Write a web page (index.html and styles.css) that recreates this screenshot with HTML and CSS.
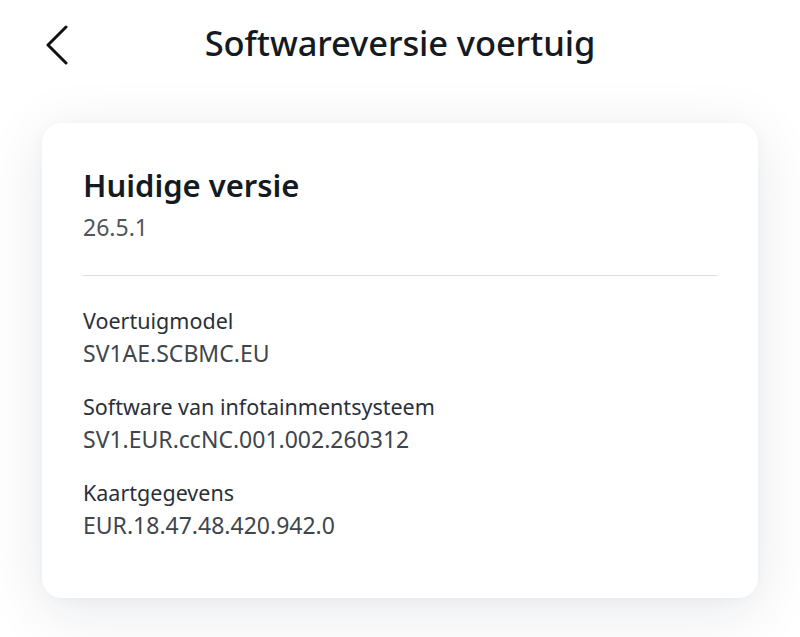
FILE: index.html
```html
<!DOCTYPE html>
<html lang="nl">
<head>
<meta charset="utf-8">
<title>Softwareversie voertuig</title>
<link rel="stylesheet" href="styles.css">
</head>
<body>
<header class="topbar">
  <button class="back" aria-label="Terug">
    <svg width="24" height="40" viewBox="0 0 24 40" fill="none" stroke="#111" stroke-width="3" stroke-linecap="round" stroke-linejoin="round"><path d="M21 2 L3 20 L21 38"/></svg>
  </button>
  <h1 class="title">Softwareversie voertuig</h1>
</header>
<main class="content">
  <section class="card">
    <div class="current">
      <h2 class="current-title">Huidige versie</h2>
      <p class="current-value">26.5.1</p>
    </div>
    <hr class="divider">
    <dl class="details">
      <div class="item">
        <dt>Voertuigmodel</dt>
        <dd>SV1AE.SCBMC.EU</dd>
      </div>
      <div class="item">
        <dt>Software van infotainmentsysteem</dt>
        <dd>SV1.EUR.ccNC.001.002.260312</dd>
      </div>
      <div class="item">
        <dt>Kaartgegevens</dt>
        <dd>EUR.18.47.48.420.942.0</dd>
      </div>
    </dl>
  </section>
</main>
</body>
</html>
```
FILE: styles.css
```css
* { box-sizing: border-box; }
html, body { margin: 0; padding: 0; }
body {
  background: #ffffff;
  font-family: "Noto Sans", "Open Sans", sans-serif;
  color: #141a22;
  width: 800px;
  height: 637px;
  overflow: hidden;
}
.topbar {
  position: relative;
  height: 92px;
  display: flex;
  justify-content: center;
  padding-top: 19px;
}
.back {
  position: absolute;
  left: 45px;
  top: 25px;
  width: 24px;
  height: 40px;
  padding: 0;
  border: 0;
  background: none;
  display: flex;
}
.title {
  margin: 0;
  font-size: 34.5px;
  line-height: 47px;
  font-weight: 500;
  letter-spacing: -0.1px;
  color: #141a22;
}
.content {
  padding: 31px 42px 0;
}
.card {
  background: #fff;
  border-radius: 20px;
  height: 475px;
  padding: 40px 41px 0;
  box-shadow: 0 12px 60px rgba(20, 30, 60, 0.10), 0 2px 12px rgba(20, 30, 60, 0.03);
}
.current-title {
  margin: 0;
  font-size: 31px;
  font-weight: 600;
  line-height: 44px;
  color: #141a22;
}
.current-value {
  margin: 4px 0 0;
  font-size: 23px;
  line-height: 32px;
  color: #50555c;
}
.divider {
  border: 0;
  border-top: 1px solid #dcdde0;
  margin: 32px 0 0;
}
.details {
  margin: 28px 0 0;
  display: flex;
  flex-direction: column;
  gap: 21px;
}
.item dt {
  font-size: 21.5px;
  line-height: 33px;
  color: #2b3038;
}
.item dd {
  margin: 0;
  font-size: 23px;
  line-height: 32px;
  color: #40454c;
}
```
